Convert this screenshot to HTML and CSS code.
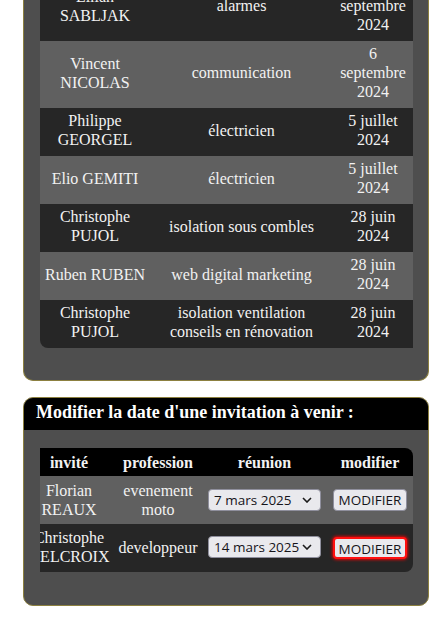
FILE: index.html
```html
<!DOCTYPE html>
<html lang="fr">
<head>
<meta charset="utf-8">
<title>Invitations</title>
<link rel="stylesheet" href="styles.css">
</head>
<body>
<div class="page">
  <section class="panel panel-past">
    <div class="t1">
      <div class="r1 dark"><div class="c">Lilian SABLJAK</div><div class="c">alarmes</div><div class="c">6 septembre 2024</div></div>
      <div class="r1 light"><div class="c">Vincent NICOLAS</div><div class="c">communication</div><div class="c">6 septembre 2024</div></div>
      <div class="r1 dark"><div class="c">Philippe GEORGEL</div><div class="c">électricien</div><div class="c">5 juillet 2024</div></div>
      <div class="r1 light"><div class="c">Elio GEMITI</div><div class="c">électricien</div><div class="c">5 juillet 2024</div></div>
      <div class="r1 dark"><div class="c">Christophe PUJOL</div><div class="c">isolation sous combles</div><div class="c">28 juin 2024</div></div>
      <div class="r1 light"><div class="c">Ruben RUBEN</div><div class="c">web digital marketing</div><div class="c">28 juin 2024</div></div>
      <div class="r1 dark"><div class="c">Christophe PUJOL</div><div class="c">isolation ventilation conseils en rénovation</div><div class="c">28 juin 2024</div></div>
    </div>
  </section>

  <section class="panel panel-edit">
    <h2 class="panel-title">Modifier la date d'une invitation à venir :</h2>
    <div class="t2">
      <div class="r2 head"><div class="c2"><span>invité</span></div><div class="c2 col2"><span>profession</span></div><div class="c2 col3"><span>réunion</span></div><div class="c2"><span>modifier</span></div></div>
      <div class="r2 light">
        <div class="c2"><span>Florian REAUX</span></div>
        <div class="c2 col2"><span>evenement moto</span></div>
        <div class="c2 col3"><span class="sel"><select><option>7 mars 2025</option></select><svg class="caret" viewBox="0 0 10 6" width="10" height="6"><path d="M1 1 L5 5 L9 1" fill="none" stroke="#1b1b1b" stroke-width="1.6"/></svg></span></div>
        <div class="c2"><button class="btn">MODIFIER</button></div>
      </div>
      <div class="r2 dark">
        <div class="c2"><span>Christophe DELCROIX</span></div>
        <div class="c2 col2"><span>developpeur</span></div>
        <div class="c2 col3"><span class="sel"><select><option>14 mars 2025</option></select><svg class="caret" viewBox="0 0 10 6" width="10" height="6"><path d="M1 1 L5 5 L9 1" fill="none" stroke="#1b1b1b" stroke-width="1.6"/></svg></span></div>
        <div class="c2"><button class="btn focus">MODIFIER</button></div>
      </div>
    </div>
  </section>
</div>
</body>
</html>
```

FILE: styles.css
```css
html, body {
  margin: 0;
  padding: 0;
  background: #ffffff;
}
body {
  font-family: "Liberation Serif", "Times New Roman", serif;
  font-size: 16px;
  color: #f2f2f2;
}
.page {
  padding-left: 23px;
  width: 406px;
}
.panel {
  background: #4e4e4e;
  border: 1px solid #8c8040;
  border-radius: 10px;
  overflow: hidden;
}
.panel-past {
  margin-top: -26px;
  border-top: none;
  border-radius: 0 0 10px 10px;
  padding: 0 15px 32px 16px;
}
.t1 {
  border-radius: 0 0 0 8px;
  overflow: hidden;
}
.r1 {
  display: grid;
  grid-template-columns: 110px 183px 80px;
}
.dark { background: #262626; }
.light { background: #606060; }
.c {
  padding: 3px 4px 7px;
  line-height: 19px;
  text-align: center;
  display: flex;
  align-items: center;
  justify-content: center;
}
.panel-edit {
  margin-top: 16px;
  padding-bottom: 33px;
}
.panel-title {
  margin: 0;
  background: #000000;
  color: #ffffff;
  font-size: 18px;
  font-weight: bold;
  line-height: 21px;
  padding: 4px 12px 7px;
}
.t2 {
  margin: 18px 15px 0 16px;
  border-radius: 0 8px 8px 0;
  overflow: hidden;
}
.r2 {
  display: grid;
  grid-template-columns: 58px 120px 109px 86px;
}
.r2.head {
  background: #000000;
  font-weight: bold;
}
.r2.head .c2 {
  height: 28px;
}
.c2 {
  height: 48px;
  display: flex;
  flex-direction: column;
  align-items: center;
  justify-content: center;
  line-height: 19px;
  text-align: center;
}
.c2 > span {
  display: block;
}
.r2.dark .c2 > span {
  margin-top: -2px;
}
.r2 .col2 {
  padding: 0 8px;
}
.r2 .col3 {
  padding-right: 16px;
}
.sel {
  position: relative;
  display: block;
  width: 113px;
  height: 22px;
  flex-shrink: 0;
}
.r2.dark .sel {
  margin-top: 0;
}
.sel select {
  appearance: none;
  -webkit-appearance: none;
  width: 113px;
  height: 22px;
  margin: 0;
  padding: 0 0 0 5px;
  box-sizing: border-box;
  background: #e9e9ed;
  border: 1px solid #8f8f9d;
  border-radius: 4px;
  font-family: "Open Sans", "Noto Sans", sans-serif;
  font-size: 13.5px;
  color: #15141a;
}
.caret {
  position: absolute;
  right: 9px;
  top: 8px;
}
.btn {
  height: 22px;
  margin: 0;
  padding: 0 5px;
  background: #e9e9ed;
  border: 1px solid #8f8f9d;
  border-radius: 4px;
  font-family: "Open Sans", "Noto Sans", sans-serif;
  font-size: 13.5px;
  color: #15141a;
  line-height: 20px;
}
.btn.focus {
  border: 2px solid #ff1010;
  box-shadow: 0 0 3px 1px rgba(255, 0, 0, 0.8);
  padding: 0 4px;
}
```
